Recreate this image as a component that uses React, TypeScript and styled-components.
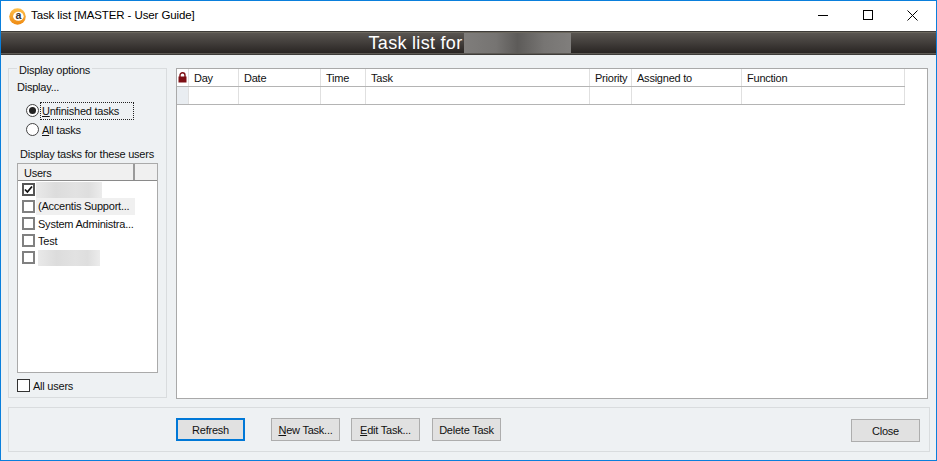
import React from 'react';
import styled, { createGlobalStyle } from 'styled-components';

const Global = createGlobalStyle`
  html, body { margin: 0; padding: 0; background: #fff; overflow: hidden; }
  body { font-family: "Liberation Sans", Arial, sans-serif; font-size: 11px; letter-spacing: -0.23px; color: #111; }
`;

const Win = styled.div`
  width: 937px; height: 461px; box-sizing: border-box;
  border: 1px solid #0a7fdc;
  background: #eef1f3; display: flex; flex-direction: column;
`;
const TitleBar = styled.div`
  height: 30px; background: #fff; display: flex; align-items: center; flex: none;
  padding: 0 1px 0 8px; font-size: 11.5px; letter-spacing: -0.1px; color: #000;
`;
const TitleText = styled.span`
  margin-left: 5px; flex: 1; position: relative; top: -1px;
`;
const WinBtn = styled.div`
  width: 45px; height: 30px; display: flex; align-items: center; justify-content: center;
  position: relative; top: -1px;
`;
const Band = styled.div`
  height: 24px; flex: none; box-sizing: border-box;
  border-top: 1px solid #3e3c39; border-bottom: 1px solid #3f3d3a;
  box-shadow: inset 0 1px 0 #6c685f, inset 0 -1px 0 #5d5a55;
  background: linear-gradient(#5b5753, #272321);
  display: flex; justify-content: center; align-items: center;
  color: #fff; font-size: 18px;
`;
const BandText = styled.span`
  display: flex; align-items: center; margin-left: 3px; letter-spacing: 0.3px;
`;
const BandBlur = styled.span`
  display: block; width: 107px; height: 20px; margin-left: 2px;
  background: linear-gradient(90deg, #7f7d7b 0%, #767472 30%, #5d5b59 50%, #777573 75%, #807e7c 100%);
`;
const Body = styled.div`
  flex: 1; min-height: 0; display: flex; gap: 9px; padding: 5px 8px 0 7px;
`;
const Group = styled.fieldset`
  width: 159px; height: 338px; box-sizing: border-box; margin: 0; flex: none;
  border: 1px solid #d9dcde; padding: 0 8px; display: flex; flex-direction: column;
  min-inline-size: 0;
`;
const Legend = styled.legend`
  padding: 4px 2px 0; line-height: 13px;
`;
const Label = styled.div`
  line-height: 13px; margin-top: 4px;
`;
const RadioRow = styled.div<{ $first?: boolean }>`
  display: flex; align-items: center; gap: 2px; margin-left: 9px; height: 19px;
  margin-top: ${p => (p.$first ? '7px' : '0')};
`;
const RadioDot = styled.span<{ $on?: boolean }>`
  width: 13px; height: 13px; box-sizing: border-box; border-radius: 50%; background: #fff; border: 1px solid #444;
  display: flex; align-items: center; justify-content: center; flex: none;
  &::after { content: ''; width: 7px; height: 7px; border-radius: 50%; background: ${p => (p.$on ? '#222' : 'transparent')}; }
`;
const RadioText = styled.span<{ $focus?: boolean }>`
  box-sizing: border-box; padding: 1px 0 1px 1px; width: ${p => (p.$focus ? '92px' : 'auto')};
  outline: ${p => (p.$focus ? '1px dotted #222' : 'none')};
  line-height: 14px; white-space: nowrap;
  u { text-underline-offset: 1px; }
`;
const UsersLabel = styled(Label)`
  margin-top: 9px; margin-left: 3px; white-space: nowrap;
`;
const List = styled.div`
  margin-top: 2px; width: 141px; height: 210px; box-sizing: border-box; background: #fff;
  border: 1px solid #aaa; flex: none; display: flex; flex-direction: column;
`;
const ListHead = styled.div`
  height: 16px; flex: none; display: flex; background: #f0f0f0; border-bottom: 1px solid #8a8a8a; box-sizing: content-box;
`;
const ListHeadCell = styled.div<{ $w: number }>`
  width: ${p => p.$w}px; box-sizing: border-box; padding-left: 6px; line-height: 18px;
  border-right: 2px solid #9a9a9a; flex: none;
  &:last-child { border-right: none; flex: 1; }
`;
const ListRows = styled.div`
  display: flex; flex-direction: column; padding-left: 4px;
`;
const ListRow = styled.div`
  height: 17px; display: flex; align-items: center; gap: 3px; flex: none; white-space: nowrap;
`;
const Check = styled.span<{ $dark?: boolean }>`
  width: 13px; height: 13px; box-sizing: border-box; background: #fff; flex: none;
  border: 2px solid ${p => (p.$dark ? '#555' : '#808080')};
  display: flex; align-items: center; justify-content: center;
`;
const Smudge = styled.span<{ $w: number; $ml?: number }>`
  display: block; width: ${p => p.$w}px; height: 16px; margin-left: ${p => p.$ml ?? 0}px;
  background: linear-gradient(90deg, #e9e9e9, #dcdcdc 30%, #e2e2e2 60%, #dedede 80%, #ececec);
`;
const ShadedText = styled.span`
  background: #f0f0f0; display: block; width: 99px; height: 17px; line-height: 17px;
  margin-left: -2px; padding-left: 2px; box-sizing: border-box; white-space: nowrap;
`;
const AllUsers = styled.div`
  display: flex; align-items: center; gap: 3px; margin-top: 6px;
`;
const AllBox = styled.span`
  width: 13px; height: 13px; box-sizing: border-box; border: 1px solid #333; background: #fff; flex: none;
`;
const Grid = styled.div`
  width: 752px; height: 331px; box-sizing: border-box; background: #fff; flex: none;
  border: 1px solid #a9a9a9; margin-top: 8px; display: flex; flex-direction: column;
`;
const GridRow = styled.div`
  height: 18px; display: flex; flex: none; box-sizing: border-box; width: 728px;
  border-bottom: 1px solid #b4b4b4;
`;
const Cell = styled.div<{ $w: number; $stub?: boolean }>`
  width: ${p => p.$w}px; flex: none; box-sizing: border-box; padding-left: 5px;
  border-right: 1px solid #e0e0e0; line-height: 18px; white-space: nowrap;
  background: ${p => (p.$stub ? '#e9edf1' : 'transparent')};
  &:first-child { padding: 0; display: flex; align-items: center; justify-content: center; }
`;
const Footer = styled.div`
  flex: none; height: 45px; box-sizing: border-box; margin: 0 6px 8px 7px;
  border: 1px solid #d9dcde; display: flex; align-items: center; padding: 0 9px 0 167px;
`;
const Btn = styled.div<{ $primary?: boolean; $gap?: number; $drop?: boolean }>`
  width: 69px; height: 23px; box-sizing: border-box; background: #e1e1e1;
  border: ${p => (p.$primary ? '2px solid #0078d7' : '1px solid #adadad')};
  display: flex; align-items: center; justify-content: center; flex: none;
  margin-left: ${p => p.$gap ?? 0}px; margin-top: ${p => (p.$drop ? '2px' : '0')};
  u { text-underline-offset: 1px; }
`;
const Spacer = styled.div` flex: 1; `;

const cols: [string, number][] = [
  ['Day', 50], ['Date', 82], ['Time', 45], ['Task', 224], ['Priority', 42], ['Assigned to', 110], ['Function', 163],
];

const CheckMark = () => (
  <svg width="9" height="9" viewBox="0 0 9 9"><path d="M1 4.5 L3.4 7 L8 1.5" fill="none" stroke="#111" strokeWidth="1.8" /></svg>
);

export default function App() {
  return (
    <>
      <Global />
      <Win>
        <TitleBar>
          <svg width="17" height="17" viewBox="0 0 16 16">
            <defs>
              <linearGradient id="o" x1="0" y1="0" x2="0" y2="1">
                <stop offset="0" stopColor="#ffc04a" /><stop offset="1" stopColor="#ee8a12" />
              </linearGradient>
            </defs>
            <circle cx="8" cy="8" r="7.8" fill="url(#o)" />
            <ellipse cx="8.8" cy="7.8" rx="5" ry="4.2" fill="#fff" />
            <text x="8.8" y="10.8" fontSize="10" fontWeight="bold" textAnchor="middle" fill="#333" fontFamily="Liberation Sans">a</text>
          </svg>
          <TitleText>Task list [MASTER - User Guide]</TitleText>
          <WinBtn><svg width="10" height="10" viewBox="0 0 10 10"><path d="M0 5.5H10" stroke="#000" /></svg></WinBtn>
          <WinBtn><svg width="10" height="10" viewBox="0 0 10 10"><rect x=".5" y=".5" width="9" height="9" fill="none" stroke="#000" /></svg></WinBtn>
          <WinBtn><svg width="11" height="11" viewBox="0 0 11 11"><path d="M.5 .5L10.5 10.5M10.5 .5L.5 10.5" stroke="#000" /></svg></WinBtn>
        </TitleBar>
        <Band>
          <BandText>Task list for<BandBlur /></BandText>
        </Band>
        <Body>
          <Group>
            <Legend>Display options</Legend>
            <Label>Display...</Label>
            <RadioRow $first>
              <RadioDot $on />
              <RadioText $focus><u>U</u>nfinished tasks</RadioText>
            </RadioRow>
            <RadioRow>
              <RadioDot />
              <RadioText><u>A</u>ll tasks</RadioText>
            </RadioRow>
            <UsersLabel>Display tasks for these users</UsersLabel>
            <List>
              <ListHead>
                <ListHeadCell $w={117}>Users</ListHeadCell>
                <ListHeadCell $w={22} />
              </ListHead>
              <ListRows>
                <ListRow><Check $dark><CheckMark /></Check><Smudge $w={66} $ml={-2} /></ListRow>
                <ListRow><Check /><ShadedText>(Accentis Support...</ShadedText></ListRow>
                <ListRow><Check />System Administra...</ListRow>
                <ListRow><Check />Test</ListRow>
                <ListRow><Check /><Smudge $w={62} /></ListRow>
              </ListRows>
            </List>
            <AllUsers><AllBox />All users</AllUsers>
          </Group>
          <Grid>
            <GridRow>
              <Cell $w={12}>
                <svg width="9" height="11" viewBox="0 0 9 11">
                  <path d="M2 5V3.2a2.5 2.5 0 0 1 5 0V5" fill="none" stroke="#7d0f14" strokeWidth="1.4" />
                  <rect x=".5" y="4.5" width="8" height="6" fill="#7d0f14" />
                </svg>
              </Cell>
              {cols.map(([n, w]) => <Cell key={n} $w={w}>{n}</Cell>)}
            </GridRow>
            <GridRow>
              <Cell $w={12} $stub />
              {cols.map(([n, w]) => <Cell key={n} $w={w} />)}
            </GridRow>
          </Grid>
        </Body>
        <Footer>
          <Btn $primary>Refresh</Btn>
          <Btn $gap={26}><span><u>N</u>ew Task...</span></Btn>
          <Btn $gap={11}><span><u>E</u>dit Task...</span></Btn>
          <Btn $gap={12}>Delete Task</Btn>
          <Spacer />
          <Btn $drop>Close</Btn>
        </Footer>
      </Win>
    </>
  );
}
